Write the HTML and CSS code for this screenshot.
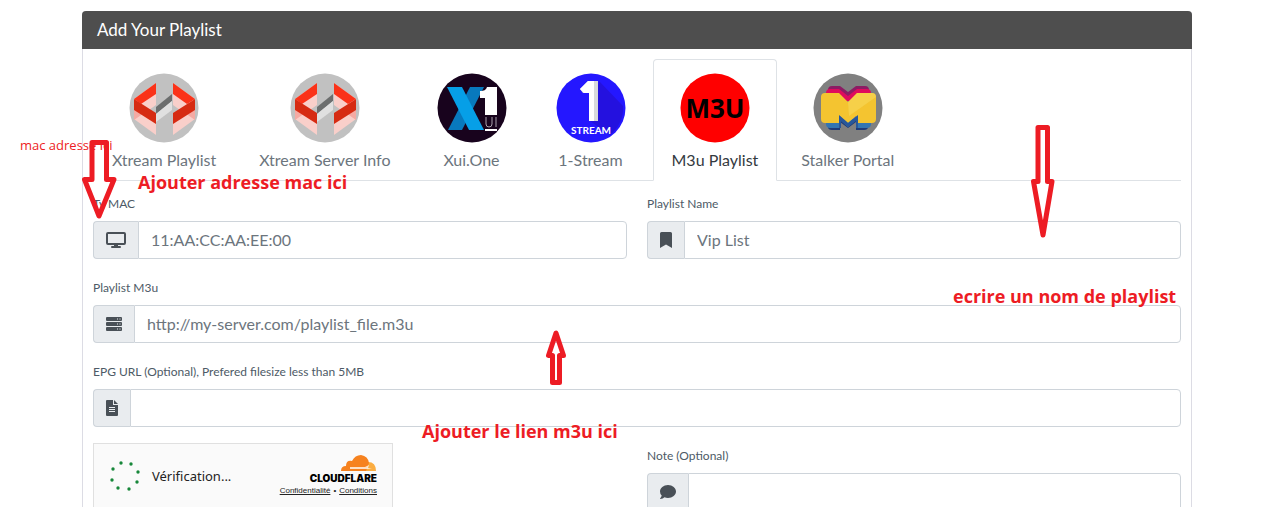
FILE: index.html
```html
<!DOCTYPE html>
<html lang="fr">
<head>
<meta charset="utf-8">
<meta name="viewport" content="width=device-width, initial-scale=1">
<title>Add Your Playlist</title>
<link rel="stylesheet" href="styles.css">
</head>
<body>
<svg class="defs" width="0" height="0" aria-hidden="true">
  <defs>
    <symbol id="xtream" viewBox="0 0 70 70">
      <circle cx="35" cy="35" r="34.5" fill="#c1c1c1"/>
      <path d="M5 26 27 10v52L5 46z" fill="#f9cfca"/>
      <path d="M66 26 44 10v52l22-16z" fill="#f9cfca"/>
      <path d="m20 37 7-5v9zM51 37l-7-5v9z" fill="#c1c1c1"/>
      <path d="M5 36v11l10-7zM66 36v11l-10-7z" fill="#f5aaa3"/>
      <path d="M5 26 27 10v11L12 31z" fill="#fa3218"/>
      <path d="M5 26v11l22 14V40z" fill="#d62b12"/>
      <path d="M66 26 44 10v11l14 10z" fill="#fa3218"/>
      <path d="M66 26v11L44 51V40z" fill="#d62b12"/>
      <path d="M27 34 43 21v7L27 41z" fill="#6c6e6e"/>
      <path d="M27 41 43 28v9L27 49z" fill="#e0e0e0"/>
    </symbol>
  </defs>
</svg>

<main class="page">
  <section class="card">
    <h1 class="card-title">Add Your Playlist</h1>
    <div class="card-body">
      <nav class="tabs" aria-label="Playlist type">
        <a class="tab" href="#xtream-playlist">
          <svg class="tab-logo" aria-hidden="true"><use href="#xtream"/></svg>
          Xtream Playlist
        </a>
        <a class="tab" href="#xtream-server">
          <svg class="tab-logo" aria-hidden="true"><use href="#xtream"/></svg>
          Xtream Server Info
        </a>
        <a class="tab" href="#xui">
          <svg class="tab-logo" viewBox="0 0 70 70" aria-hidden="true">
            <circle cx="35" cy="35" r="34.5" fill="#18031d"/>
            <path d="M33 14h14L25 57H11z" fill="#0879bd"/>
            <path d="M10 14h15l22 43H32z" fill="#069fe7"/>
            <path d="M50 14h10v28H48V25h-5v-7c4 0 6-1 7-4z" fill="#fff"/>
            <path d="M49 44v7q0 3 3 3t3-3v-7M59 44v10" fill="none" stroke="#a9a2ad"/>
            <path d="M48 56h12v2H48z" fill="#fff"/>
          </svg>
          Xui.One
        </a>
        <a class="tab" href="#one-stream">
          <svg class="tab-logo" viewBox="0 0 70 70" aria-hidden="true">
            <circle cx="35" cy="35" r="34.5" fill="#2417ff"/>
            <path d="M43 8 67 33a34 34 0 0 1-13 29L34 48z" fill="#2411df"/>
            <path d="M32 8h10v40h-9V20h-6l-3-4z" fill="#d7d9db"/>
            <path d="M32 8h6v40h-5V20h-5l-4-4z" fill="#fff"/>
            <text x="35" y="61" class="logo-stream">STREAM</text>
          </svg>
          1-Stream
        </a>
        <a class="tab tab-active" href="#m3u" aria-current="page">
          <svg class="tab-logo" viewBox="0 0 70 70" aria-hidden="true">
            <circle cx="35" cy="35" r="34.5" fill="#f00"/>
            <text x="35" y="45" class="logo-m3u">M3U</text>
          </svg>
          M3u Playlist
        </a>
        <a class="tab" href="#stalker">
          <svg class="tab-logo" viewBox="0 0 70 70" aria-hidden="true">
            <circle cx="35" cy="35" r="34.5" fill="#808080"/>
            <path d="M15 17q0-4 4-4h8l8 6 8-6h9q4 0 4 4v7H15z" fill="#8c1c64"/>
            <path d="M13 20q0-4 4-4h9l9 7 9-7h10q4 0 4 4v8H13z" fill="#df0b5d"/>
            <path d="M15 48h40v6q0 3-4 3h-8v-8l-8 6-8-6v8h-8q-4 0-4-3z" fill="#203b78"/>
            <path d="M13 46h45v5q0 4-4 4H43v-8l-8 7-8-7v8H17q-4 0-4-4z" fill="#3475b1"/>
            <path d="M12 20h14l9 9 9-9h15q4 0 4 4v22q0 4-4 4H45l-2-7-8 7-8-7-1 7H12q-4 0-4-4V24q0-4 4-4z" fill="#f4c430"/>
            <path d="M26 42v13h2v-7l7 6 8-6v7h2V42l-10 8z" fill="#28579b"/>
            <path d="m35 29 9-9h15q4 0 4 4L36 43z" fill="#f8dc61" opacity=".5"/>
          </svg>
          Stalker Portal
        </a>
      </nav>

      <form class="form">
        <div class="field">
          <label for="mac">Tv MAC</label>
          <div class="group">
            <span class="addon"><svg class="icon-wide" viewBox="0 0 20 16" aria-hidden="true"><rect x="1" y="1" width="18" height="11" rx="1" fill="none" stroke="currentColor" stroke-width="2"/><path d="M8 12h4v2h2q1 0 1 1t-1 1H6q-1 0-1-1t1-1h2z" fill="currentColor"/></svg></span>
            <input id="mac" type="text" placeholder="11:AA:CC:AA:EE:00">
          </div>
        </div>
        <div class="field">
          <label for="name">Playlist Name</label>
          <div class="group">
            <span class="addon"><svg class="icon-narrow" viewBox="0 0 12 16" aria-hidden="true"><path d="M0 16V1.500Q0 0 1.500 0h9Q12 0 12 1.500V16l-6-3.500z" fill="currentColor"/></svg></span>
            <input id="name" type="text" placeholder="Vip List">
          </div>
        </div>
        <div class="field field-full">
          <label for="m3u">Playlist M3u</label>
          <div class="group">
            <span class="addon"><svg class="icon" viewBox="0 0 16 16" aria-hidden="true"><g fill="currentColor"><rect y="1" width="16" height="4" rx="1"/><rect y="6" width="16" height="4" rx="1"/><rect y="11" width="16" height="4" rx="1"/></g><path d="M11 2.500h1v1h-1zM13.500 2.500h1v1h-1zM11 7.500h1v1h-1zM13.500 7.500h1v1h-1zM11 12.500h1v1h-1zM13.500 12.500h1v1h-1z" fill="#e9ecef"/></svg></span>
            <input id="m3u" type="text" placeholder="http://my-server.com/playlist_file.m3u">
          </div>
        </div>
        <div class="field field-full">
          <label for="epg">EPG URL (Optional), Prefered filesize less than 5MB</label>
          <div class="group">
            <span class="addon"><svg class="icon-narrow" viewBox="0 0 12 16" aria-hidden="true"><path d="M1 0h6v5h5v10q0 1-1 1H1q-1 0-1-1V1q0-1 1-1zM8 0l4 4H8z" fill="currentColor"/><path d="M3 7.500h6M3 9.500h6M3 11.500h6" stroke="#e9ecef"/></svg></span>
            <input id="epg" type="text">
          </div>
        </div>
        <div class="captcha">
          <svg class="spinner" viewBox="0 0 32 32" aria-hidden="true"><g fill="#17873a"><circle cx="12" cy="3" r="1.700"/><circle cx="22" cy="4" r="1.700"/><circle cx="29" cy="12" r="1.700"/><circle cx="28" cy="22" r="1.700"/><circle cx="20" cy="29" r="1.700"/><circle cx="9" cy="28" r="1.700"/><circle cx="3" cy="20" r="1.700"/><circle cx="4" cy="9" r="1.700"/></g></svg>
          <span class="captcha-text">Vérification...</span>
          <div class="brand">
            <svg class="cloud" viewBox="0 0 36 16" aria-hidden="true"><path d="M27 7q8 0 8 9H24z" fill="#fbad41"/><path d="M0 16q0-5 5-5 0-6 6-5 3-6 9-6 7 1 8 8l-3 8z" fill="#f6821f"/><path d="M9 12h15l4-2-1 3 4 1H9z" fill="#fff" opacity=".75"/></svg>
            <span class="brand-name">CLOUDFLARE</span>
            <span class="brand-links"><a href="#privacy">Confidentialité</a><span>•</span><a href="#terms">Conditions</a></span>
          </div>
        </div>
        <div class="field">
          <label for="note">Note (Optional)</label>
          <div class="group">
            <span class="addon"><svg class="icon" viewBox="0 0 16 16" aria-hidden="true"><path d="M8 1c4.500 0 8 3 8 6.500S12.500 14 8 14q-2 0-3.500-.7Q3 15 .3 15q-.5-.3 0-.8 1.200-1.300 1.400-2.700Q0 10 0 7.500C0 4 3.500 1 8 1z" fill="currentColor"/></svg></span>
            <input id="note" type="text">
          </div>
        </div>
      </form>
    </div>
  </section>

  <div class="notes">
    <svg class="arrow arrow-mac" viewBox="0 0 36 80" aria-hidden="true"><path class="arrow-fill" d="M10 3h14v50H10z"/><path d="M10 2.500h14.500v37H32L17 76 2.500 39.500H10z"/></svg>
    <svg class="arrow arrow-name" viewBox="0 0 24 114" aria-hidden="true"><path class="arrow-fill" d="M7 3h9v80H7z"/><path d="M7 2.500h9.500v54H21L12 110 2.500 56.500H7z"/></svg>
    <svg class="arrow arrow-link" viewBox="0 0 20 58" aria-hidden="true"><path d="M6.500 53.500h7v-27h4L10 4 2.500 26.500h4z"/></svg>
    <span class="note note-plain">mac adresse ici</span>
    <span class="note note-mac">Ajouter adresse mac ici</span>
    <span class="note note-name">ecrire un nom de playlist</span>
    <span class="note note-link">Ajouter le lien m3u ici</span>
  </div>
</main>
</body>
</html>
```
FILE: styles.css
```css
* { box-sizing: border-box; }

html { overflow: hidden; }

body {
  margin: 0;
  background: #fff;
  color: #212529;
  font: 16px/24px Lato, "Noto Sans", sans-serif;
}

.defs { position: absolute; }

.page {
  position: relative;
  padding: 11px 81px 0 82px;
}

.card {
  border: 1px solid #dcdce4;
  border-top: 0;
  border-radius: 4px;
}

.card-title {
  margin: 0 -1px;
  padding: 7px 15px;
  border-radius: 4px 4px 0 0;
  background: #4e4e4e;
  color: #fff;
  font-size: 17px;
  font-weight: 400;
  line-height: 24px;
}

.card-body { padding: 10px; }

.tabs {
  display: flex;
  gap: 5px;
  border-bottom: 1px solid #dee2e6;
}

.tab {
  display: flex;
  flex-direction: column;
  align-items: center;
  margin-bottom: -1px;
  padding: 8px 18px;
  border: 1px solid transparent;
  border-radius: 4px 4px 0 0;
  color: #6c757d;
  text-decoration: none;
  white-space: nowrap;
}

.tab-active {
  border-color: #dee2e6 #dee2e6 #fff;
  background: #fff;
  color: #343a40;
}

.tab-logo {
  width: 70px;
  height: 70px;
  margin: 5px 3px;
}

.logo-stream {
  fill: #fff;
  font: 700 10px Lato, sans-serif;
  text-anchor: middle;
}

.logo-m3u {
  fill: #000;
  font: 700 26px "Open Sans", sans-serif;
  text-anchor: middle;
}

.form {
  display: grid;
  grid-template-columns: 1fr 1fr;
  gap: 16px 20px;
  padding-top: 10px;
}

.field { padding-top: 4px; }

.field-full { grid-column: 1 / -1; }

.field label {
  display: block;
  margin-bottom: 8px;
  color: #4d5a66;
  font-size: 12px;
  line-height: 18px;
}

.group { display: flex; height: 38px; }

.addon {
  display: flex;
  align-items: center;
  padding: 0 12px;
  border: 1px solid #ced4da;
  border-right: 0;
  border-radius: 4px 0 0 4px;
  background: #e9ecef;
  color: #495057;
}

.icon { width: 16px; height: 16px; }
.icon-wide { width: 20px; height: 16px; }
.icon-narrow { width: 12px; height: 16px; }

.group input {
  flex: 1;
  min-width: 0;
  padding: 6px 12px;
  border: 1px solid #ced4da;
  border-radius: 0 4px 4px 0;
  background: #fff;
  color: #495057;
  font: inherit;
}

.group input::placeholder { color: #6c757d; opacity: 1; }

.captcha {
  display: flex;
  align-items: center;
  width: 300px;
  height: 65px;
  padding: 0 15px;
  border: 1px solid #e0e0e0;
  background: #fafafa;
  color: #232323;
}

.spinner { width: 32px; height: 32px; margin-right: 11px; }

.captcha-text { font: 13px/20px "Noto Sans", sans-serif; }

.brand {
  display: flex;
  flex-direction: column;
  align-items: flex-end;
  margin-left: auto;
}

.cloud { width: 36px; height: 16px; }

.brand-name {
  color: #000;
  font: 900 10px/14px Inter, sans-serif;
}

.brand-links {
  display: flex;
  gap: 3px;
  font: 8px/12px "Liberation Sans", sans-serif;
}

.brand-links a { color: #232323; }

.note {
  position: absolute;
  color: #ed1c24;
  font: 700 18px/24px "Open Sans", sans-serif;
  white-space: nowrap;
}

.note-plain { left: 20px; top: 133px; font-size: 13px; font-weight: 400; }
.note-mac { left: 138px; top: 170px; }
.note-name { left: 953px; top: 284px; }
.note-link { left: 422px; top: 419px; }

.arrow {
  position: absolute;
  fill: none;
  stroke: #ed1c24;
  stroke-width: 5px;
  stroke-linejoin: round;
}

.arrow-fill { fill: #fff; stroke: none; }

.arrow-mac { left: 82px; top: 140px; width: 36px; height: 80px; }
.arrow-name { left: 1031px; top: 125px; width: 24px; height: 114px; }
.arrow-link { left: 546px; top: 329px; width: 20px; height: 58px; }
```
